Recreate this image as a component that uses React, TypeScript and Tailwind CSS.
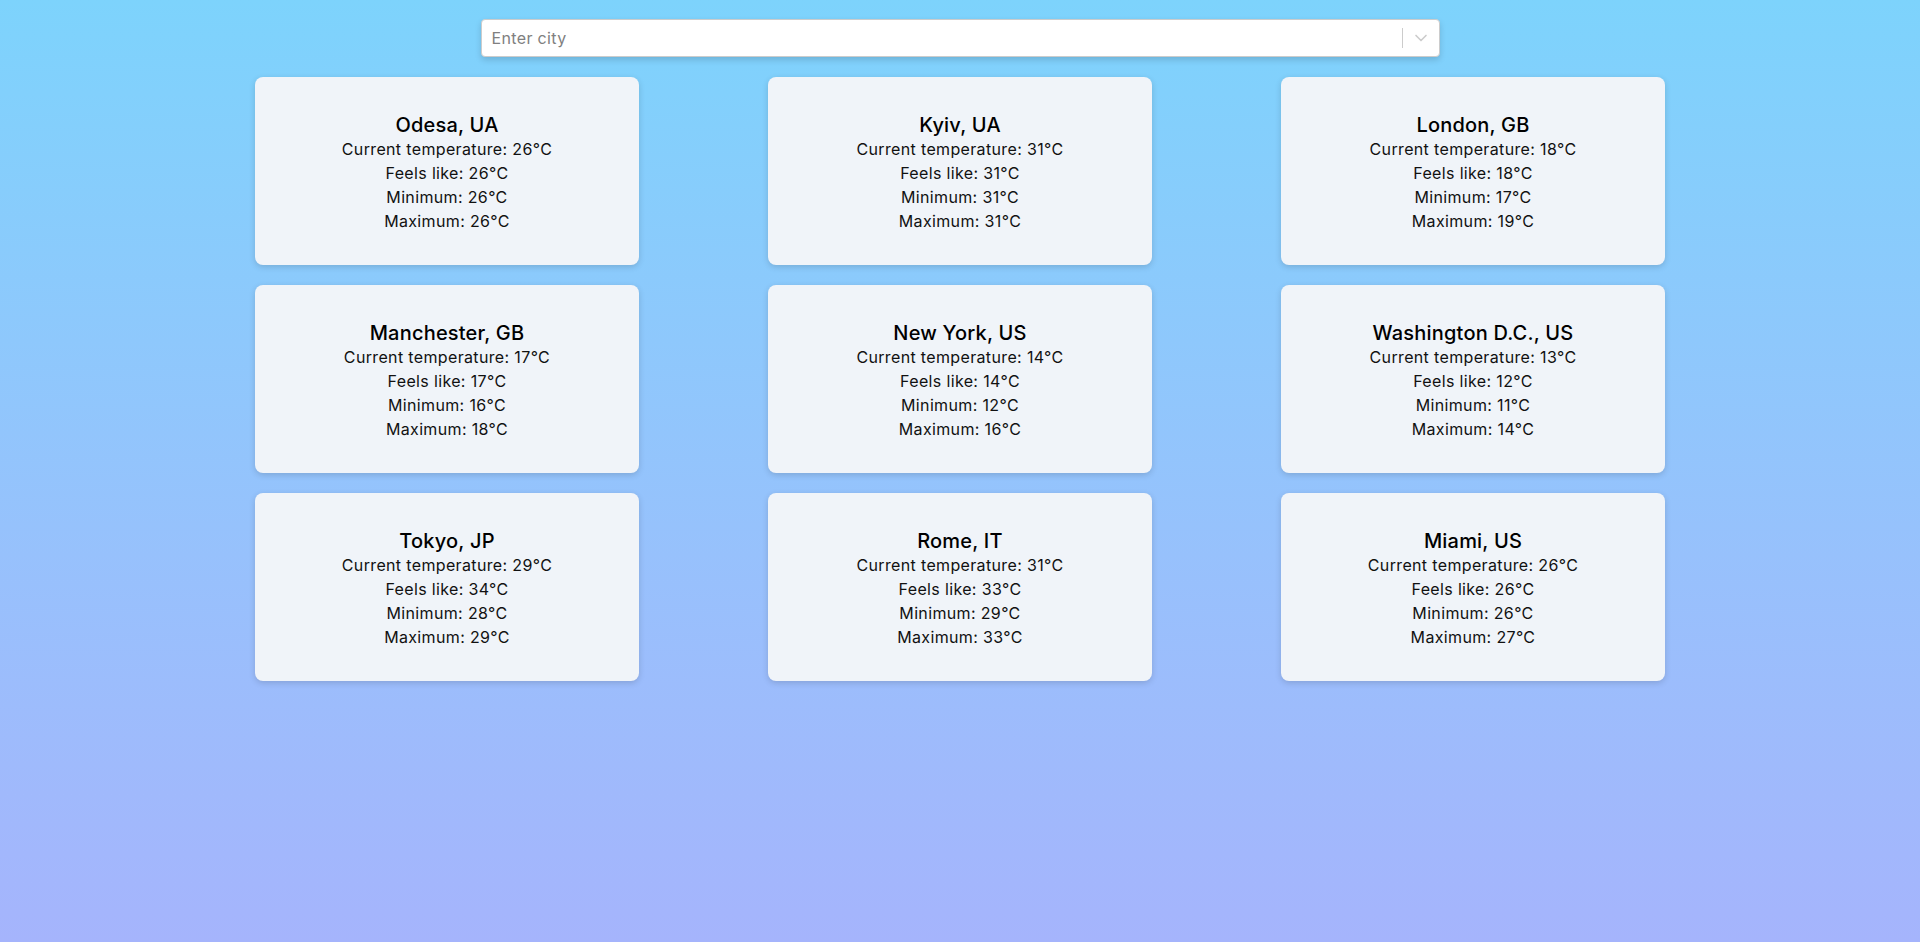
import { ChevronDown } from "lucide-react";

interface City {
  name: string;
  current: number;
  feels: number;
  min: number;
  max: number;
}

const cities: City[] = [
  { name: "Odesa, UA", current: 26, feels: 26, min: 26, max: 26 },
  { name: "Kyiv, UA", current: 31, feels: 31, min: 31, max: 31 },
  { name: "London, GB", current: 18, feels: 18, min: 17, max: 19 },
  { name: "Manchester, GB", current: 17, feels: 17, min: 16, max: 18 },
  { name: "New York, US", current: 14, feels: 14, min: 12, max: 16 },
  { name: "Washington D.C., US", current: 13, feels: 12, min: 11, max: 14 },
  { name: "Tokyo, JP", current: 29, feels: 34, min: 28, max: 29 },
  { name: "Rome, IT", current: 31, feels: 33, min: 29, max: 33 },
  { name: "Miami, US", current: 26, feels: 26, min: 26, max: 27 },
];

const CityCard = ({ city }: { city: City }) => (
  <div className="h-[188px] pt-[3px] rounded-lg bg-[#f0f4f9] shadow-[0_2px_6px_rgba(0,0,0,0.15)] flex flex-col items-center justify-center text-center">
    <h2 className="text-[20px] leading-[24px] font-medium tracking-[0.2px] text-black">{city.name}</h2>
    <p className="text-[16px] leading-[24px] tracking-[0.35px] text-[#111]">Current temperature: {city.current}°C</p>
    <p className="text-[16px] leading-[24px] tracking-[0.35px] text-[#111]">Feels like: {city.feels}°C</p>
    <p className="text-[16px] leading-[24px] tracking-[0.35px] text-[#111]">Minimum: {city.min}°C</p>
    <p className="text-[16px] leading-[24px] tracking-[0.35px] text-[#111]">Maximum: {city.max}°C</p>
  </div>
);

export default function App() {
  return (
    <div className="min-h-[942px] bg-gradient-to-b from-[#7dd3fc] to-[#a5b4fc] font-['Inter',sans-serif]">
      {/* Search */}
      <div className="pt-[19px] flex justify-center">
        <div className="w-[959px] h-[38px] bg-white border border-[#ccc] rounded shadow-[0_3px_6px_rgba(0,0,0,0.15)] flex items-center">
          <input
            placeholder="Enter city"
            className="flex-1 h-full pl-[10px] text-[16px] tracking-[0.35px] text-[#333] placeholder:text-[#808080] bg-transparent outline-none"
          />
          <span className="w-px h-5 bg-[#ccc]" />
          <div className="w-9 flex justify-center text-[#ccc]">
            <ChevronDown size={20} strokeWidth={2} />
          </div>
        </div>
      </div>

      {/* Cards */}
      <div className="mt-5 mx-auto w-[1410px] grid grid-cols-[repeat(3,384px)] justify-between gap-y-5">
        {cities.map((city) => (
          <CityCard key={city.name} city={city} />
        ))}
      </div>
    </div>
  );
}
